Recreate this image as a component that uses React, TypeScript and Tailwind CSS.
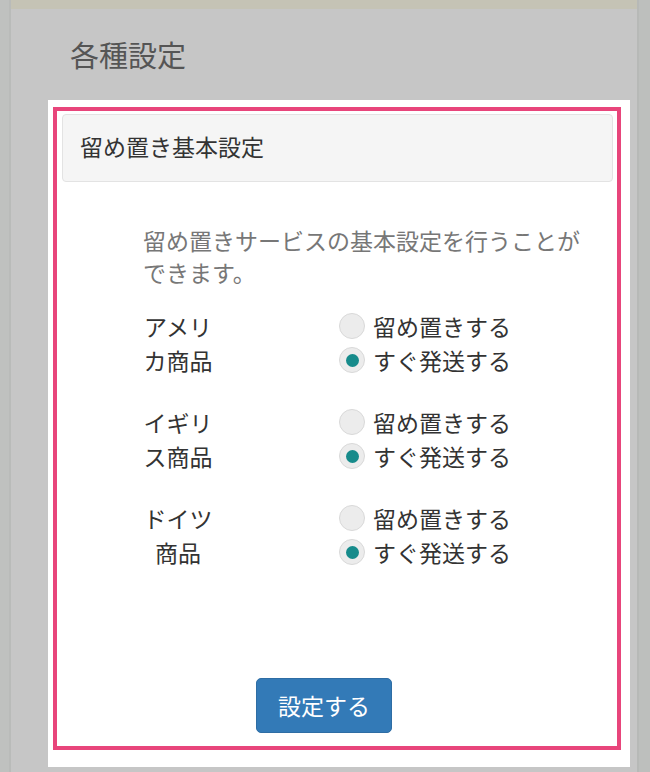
import React from "react";

const groups = [
  { label: "アメリカ商品" },
  { label: "イギリス商品" },
  { label: "ドイツ商品" },
];

function Radio({ checked, text }: { checked: boolean; text: string }) {
  return (
    <div className="flex items-center h-[34px]">
      <span className="w-[26px] h-[26px] rounded-full bg-[#ececec] border border-[#d9d9d9] flex items-center justify-center">
        {checked && <span className="w-[13px] h-[13px] rounded-full bg-[#168b8b]" />}
      </span>
      <span className="ml-[8px] text-[#333]">{text}</span>
    </div>
  );
}

export default function App() {
  return (
    <div
      className="w-[650px] h-[772px] bg-[#c6c6c6] flex overflow-hidden"
      style={{ fontFamily: '"Noto Sans CJK JP", "Noto Sans", sans-serif' }}
    >
      <div className="w-[11px] h-full bg-[#bfc1bf] border-r-2 border-[#b9bbb9]" />
      <div className="flex-1 flex flex-col">
        <div className="h-[9px] bg-[#c5c3b5]" />
        <div className="h-[91px] flex items-center pl-[59px] text-[29px] leading-none text-[#555]">
          各種設定
        </div>
        <div className="ml-[37px] w-[582px] h-[667px] bg-white pt-[7px] pl-[5px]">
          <div className="w-[568px] h-[643px] border-4 border-[#e8457b] flex flex-col">
            <div className="mt-[3px] ml-[5px] mr-[4px] h-[68px] bg-[#f5f5f5] border border-[#e3e3e3] rounded-[4px] flex items-center pl-[17px] pb-[4px] text-[23px] leading-none text-[#333]">
              留め置き基本設定
            </div>
            <div className="pl-[86px] text-[23px]">
              <p className="mt-[42px] w-[450px] leading-[32px] text-[#777]">
                留め置きサービスの基本設定を行うことができます。
              </p>
              {groups.map((g, i) => (
                <div
                  key={g.label}
                  className={`flex leading-[34px] ${i === 0 ? "mt-[21px]" : "mt-[28px]"}`}
                >
                  <div className="w-[70px] text-center text-[#333]">{g.label}</div>
                  <div className="ml-[126px] flex flex-col">
                    <Radio checked={false} text="留め置きする" />
                    <Radio checked={true} text="すぐ発送する" />
                  </div>
                </div>
              ))}
            </div>
            <div className="mt-[109px] ml-[199px]">
              <button className="w-[136px] h-[55px] bg-[#337ab7] border border-[#2e6da4] rounded-[5px] text-white text-[23px] leading-none">
                設定する
              </button>
            </div>
          </div>
        </div>
      </div>
      <div className="w-[13px] h-full bg-[#bdbfbd] border-l-2 border-[#b7b9b7]" />
    </div>
  );
}
